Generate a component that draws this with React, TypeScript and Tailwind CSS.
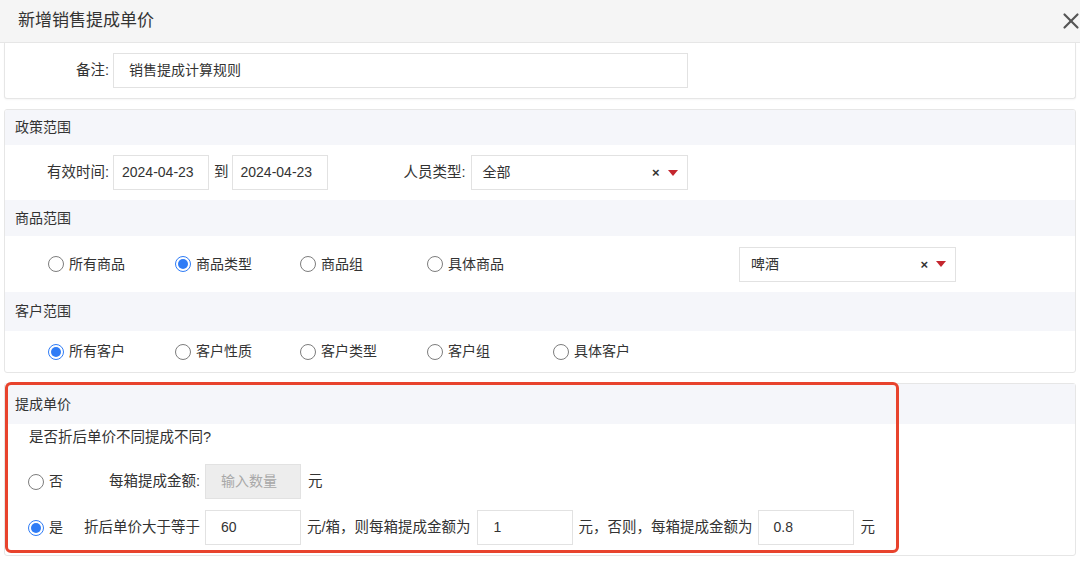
import { X } from 'lucide-react'

const font = "font-['Liberation_Sans','Noto_Sans_CJK_SC',sans-serif]"

function Radio({ checked, label }: { checked?: boolean; label: string }) {
  return (
    <label className="flex items-center gap-[5px] text-[14px] text-[#333]">
      <span
        className={
          checked
            ? 'flex h-[16px] w-[16px] items-center justify-center rounded-full border border-[#2f7cf6] bg-white'
            : 'h-[16px] w-[16px] rounded-full border border-[#7d7d7d] bg-white'
        }
      >
        {checked && <span className="h-[10px] w-[10px] rounded-full bg-[#2f7cf6]" />}
      </span>
      {label}
    </label>
  )
}

function Select({ value, width }: { value: string; width: string }) {
  return (
    <div className={`flex h-[35px] ${width} items-center border border-[#e2e2e2] bg-white pl-[11px] pr-[9px]`}>
      <span className="flex-1 text-[14px] text-[#333]">{value}</span>
      <span className="mr-[8px] text-[13px] font-bold leading-none text-[#333]">×</span>
      <span className="h-0 w-0 border-x-[5px] border-t-[6px] border-x-transparent border-t-[#c4262e]" />
    </div>
  )
}

function Band({ title, h }: { title: string; h: string }) {
  return (
    <div className={`flex ${h} items-center bg-[#f5f6fa] pl-[10px] text-[14px] text-[#333]`}>{title}</div>
  )
}

function Box({ value, disabled, pad = 'pl-[15px]' }: { value: string; disabled?: boolean; pad?: string }) {
  return (
    <div
      className={`flex h-[35px] w-[96px] items-center border border-[#e2e2e2] ${pad} text-[14px] ${
        disabled ? 'bg-[#ededed] text-[#a8a8a8]' : 'bg-white text-[#333]'
      }`}
    >
      {value}
    </div>
  )
}

export default function App() {
  return (
    <div className={`h-[564px] w-[1080px] overflow-hidden bg-white ${font}`}>
      {/* Dialog header */}
      <div className="flex h-[43px] items-center justify-between border-b border-[#e6e6e6] bg-[#f5f5f5] pl-[18px]">
        <span className="text-[17px] text-[#333]">新增销售提成单价</span>
        <X className="-mr-[4px] h-[26px] w-[26px] text-[#555]" strokeWidth={2} />
      </div>

      <div className="flex flex-col gap-[10px] px-[4px]">
        {/* Remark */}
        <div className="flex h-[56px] items-center rounded-b-[3px] border border-t-0 border-[#e6e6e6] shadow-[0_1px_2px_rgba(0,0,0,0.04)]">
          <span className="w-[104px] text-right text-[14.5px] text-[#333]">备注:</span>
          <div className="ml-[4px] flex h-[35px] w-[575px] items-center border border-[#e2e2e2] pl-[15px] text-[14px] text-[#333]">
            销售提成计算规则
          </div>
        </div>

        {/* Policy */}
        <div className="overflow-hidden rounded-[3px] border border-[#e6e6e6]">
          <Band title="政策范围" h="h-[35px]" />
          <div className="flex h-[55px] items-center text-[14.5px] text-[#333]">
            <span className="w-[104px] text-right">有效时间:</span>
            <div className="ml-[4px]">
              <Box value="2024-04-23" pad="pl-[8px]" />
            </div>
            <span className="ml-[5px] mr-[3px]">到</span>
            <Box value="2024-04-23" pad="pl-[8px]" />
            <span className="ml-[4px] w-[134px] text-right">人员类型:</span>
            <div className="ml-[5px]">
              <Select value="全部" width="w-[217px]" />
            </div>
          </div>
          <Band title="商品范围" h="h-[36px]" />
          <div className="flex h-[56px] items-center pl-[43px]">
            <div className="w-[127px]"><Radio label="所有商品" /></div>
            <div className="w-[125px]"><Radio checked label="商品类型" /></div>
            <div className="w-[127px]"><Radio label="商品组" /></div>
            <div className="w-[312px]"><Radio label="具体商品" /></div>
            <Select value="啤酒" width="w-[217px]" />
          </div>
          <Band title="客户范围" h="h-[39px]" />
          <div className="flex h-[41px] items-center pl-[43px]">
            <div className="w-[127px]"><Radio checked label="所有客户" /></div>
            <div className="w-[125px]"><Radio label="客户性质" /></div>
            <div className="w-[127px]"><Radio label="客户类型" /></div>
            <div className="w-[126px]"><Radio label="客户组" /></div>
            <Radio label="具体客户" />
          </div>
        </div>

        {/* Commission price */}
        <div className="relative rounded-[3px] border border-[#e6e6e6] text-[14.5px] text-[#333]">
          <Band title="提成单价" h="h-[40px]" />
          <div className="pl-[24px] pt-[3px] leading-[20px]">是否折后单价不同提成不同?</div>
          <div className="mt-[17px] flex items-center pl-[23px]">
            <div className="w-[79px]"><Radio label="否" /></div>
            <span className="w-[93px] text-right">每箱提成金额:</span>
            <div className="ml-[5px]"><Box value="输入数量" disabled /></div>
            <span className="ml-[7px]">元</span>
          </div>
          <div className="mt-[11px] mb-[10px] flex items-center pl-[23px]">
            <div className="w-[56px]"><Radio checked label="是" /></div>
            <span>折后单价大于等于</span>
            <div className="ml-[5px]"><Box value="60" /></div>
            <span className="ml-[6px]">元/箱，则每箱提成金额为</span>
            <div className="ml-[6px]"><Box value="1" pad="pl-[16px]" /></div>
            <span className="ml-[6px]">元，否则，每箱提成金额为</span>
            <div className="ml-[5px]"><Box value="0.8" pad="pl-[15px]" /></div>
            <span className="ml-[7px]">元</span>
          </div>
          {/* highlight outline */}
          <div className="pointer-events-none absolute -top-[2px] left-0 bottom-[2px] w-[894px] rounded-[6px] border-[3px] border-[#e8432d]" />
        </div>
      </div>
    </div>
  )
}
